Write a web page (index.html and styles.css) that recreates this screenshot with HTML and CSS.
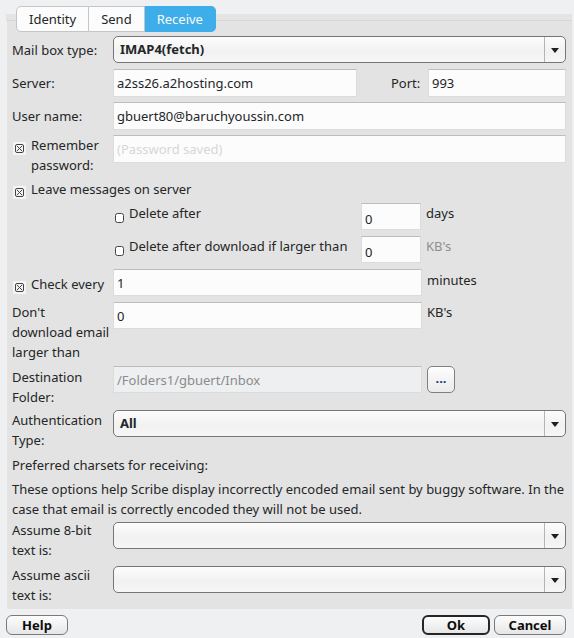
FILE: index.html
```html
<!DOCTYPE html>
<html lang="en">
<head>
    <meta charset="UTF-8">
    <title>Account options</title>
    <link rel="stylesheet" href="styles.css">
</head>
<body>

<div class="dialog">
    <div class="tabs">
        <div class="tab first">Identity</div>
        <div class="tab">Send</div>
        <div class="tab last active">Receive</div>
    </div>

    <div class="panel">
        <div class="row">
            <div class="label single">Mail box type:</div>
            <div class="select"><span class="value bold">IMAP4(fetch)</span><span class="arrow"></span></div>
        </div>

        <div class="row gap-6">
            <div class="label single">Server:</div>
            <input class="edit server" value="a2ss26.a2hosting.com">
            <div class="port-label">Port:</div>
            <input class="edit port" value="993">
        </div>

        <div class="row gap-5">
            <div class="label single">User name:</div>
            <input class="edit grow" value="gbuert80@baruchyoussin.com">
        </div>

        <div class="row gap-5">
            <div class="label check-label">
                <span class="check on"><svg width="9" height="9" viewBox="0 0 9 9"><rect x="0.5" y="0.5" width="8" height="8" rx="1.5" fill="none" stroke="#444"/><path d="M2 2 L7 7 M7 2 L2 7" stroke="#444" stroke-width="1"/></svg></span>
                <span>Remember password:</span>
            </div>
            <input class="edit grow placeholder" placeholder="(Password saved)">
        </div>

        <div class="row gap-4">
            <div class="check-line">
                <span class="check on"><svg width="9" height="9" viewBox="0 0 9 9"><rect x="0.5" y="0.5" width="8" height="8" rx="1.5" fill="none" stroke="#444"/><path d="M2 2 L7 7 M7 2 L2 7" stroke="#444" stroke-width="1"/></svg></span>
                <span>Leave messages on server</span>
            </div>
        </div>

        <div class="row gap-4">
            <div class="indent check-line">
                <span class="check off"><svg width="9" height="10" viewBox="0 0 9 10"><rect x="0.5" y="0.5" width="8" height="9" rx="2" fill="#fff" stroke="#444"/></svg></span>
                <span>Delete after</span>
            </div>
            <input class="edit small" value="0">
            <div class="unit">days</div>
        </div>

        <div class="row gap-6">
            <div class="indent check-line">
                <span class="check off"><svg width="9" height="10" viewBox="0 0 9 10"><rect x="0.5" y="0.5" width="8" height="9" rx="2" fill="#fff" stroke="#444"/></svg></span>
                <span>Delete after download if larger than</span>
            </div>
            <input class="edit small" value="0">
            <div class="unit muted">KB's</div>
        </div>

        <div class="row gap-6">
            <div class="label check-label every">
                <span class="check on"><svg width="9" height="9" viewBox="0 0 9 9"><rect x="0.5" y="0.5" width="8" height="8" rx="1.5" fill="none" stroke="#444"/><path d="M2 2 L7 7 M7 2 L2 7" stroke="#444" stroke-width="1"/></svg></span>
                <span>Check every</span>
            </div>
            <input class="edit mid" value="1">
            <div class="unit up">minutes</div>
        </div>

        <div class="row gap-6">
            <div class="label nowrap">Don't<br>download email<br>larger than</div>
            <input class="edit mid" value="0">
            <div class="unit">KB's</div>
        </div>

        <div class="row gap-4">
            <div class="label down">Destination Folder:</div>
            <input class="edit mid disabled" value="/Folders1/gbuert/Inbox" disabled>
            <div class="browse">...</div>
        </div>

        <div class="row gap-3">
            <div class="label">Authentication Type:</div>
            <div class="select"><span class="value bold">All</span><span class="arrow"></span></div>
        </div>

        <div class="row gap-5 text">Preferred charsets for receiving:</div>

        <div class="row gap-4 text">These options help Scribe display incorrectly encoded email sent by buggy software. In the case that email is correctly encoded they will not be used.</div>

        <div class="row gap-1">
            <div class="label">Assume 8-bit text is:</div>
            <div class="select drop-2"><span class="value"></span><span class="arrow"></span></div>
        </div>

        <div class="row gap-5">
            <div class="label">Assume ascii text is:</div>
            <div class="select drop-1"><span class="value"></span><span class="arrow"></span></div>
        </div>
    </div>

    <div class="buttons">
        <button class="btn help">Help</button>
        <div class="spacer"></div>
        <button class="btn ok">Ok</button>
        <button class="btn cancel">Cancel</button>
    </div>
</div>

</body>
</html>
```

FILE: styles.css
```css
body {
    margin: 0;
    background-color: #eff0f1;
    font-family: "Noto Sans", "Open Sans", sans-serif;
    font-size: 13px;
    color: #232627;
}

.dialog {
    width: 574px;
    height: 638px;
    box-sizing: border-box;
    padding-top: 6px;
}

.tabs {
    display: flex;
    margin-left: 16px;
    height: 25px;
    position: relative;
    z-index: 1;
}

.tab {
    background-color: #fcfcfc;
    border: 1px solid #c4c5c6;
    border-left: none;
    padding: 0 12px;
    line-height: 24px;
    height: 24px;
}

.tab.first {
    border-left: 1px solid #c4c5c6;
    border-radius: 5px 0 0 5px;
}

.tab.last {
    border-radius: 0 5px 5px 0;
}

.tab.active {
    background-color: #3daee9;
    border-color: #3daee9;
    color: #fcfcfc;
}

.panel {
    background-color: #e3e3e3;
    margin: -11px 2px 0 6px;
    border-top: 1px solid #d6d6d6;
    border-left: 1px solid #f1f1f1;
    border-bottom: 1px solid #f1f1f1;
    padding: 15px 6px 5px 5px;
    height: 590px;
    box-sizing: border-box;
    box-shadow: 0 -6px 0 #e4e4e4;
}

.row {
    display: flex;
    align-items: flex-start;
    line-height: 20px;
}

.gap-1 { margin-top: 1px; }
.gap-3 { margin-top: 3px; }
.gap-4 { margin-top: 4px; }
.gap-5 { margin-top: 5px; }
.gap-6 { margin-top: 6px; }

.label {
    width: 101px;
    flex: none;
}

.label.nowrap {
    white-space: nowrap;
}

.label.single {
    padding-top: 4px;
}

.label.down {
    padding-top: 1px;
}

.label.every {
    padding-top: 5px;
}

.check-label,
.check-line {
    display: flex;
    align-items: flex-start;
}

.check {
    flex: none;
    width: 13px;
    height: 13px;
    display: flex;
    align-items: center;
    justify-content: center;
    margin: 7px 5px 0 1px;
}

.check.on {
    background-color: #f4f4f4;
}

.check.off {
    margin: 8px 4px 0 1px;
    width: 11px;
}

.indent {
    margin-left: 101px;
    width: 248px;
    flex: none;
}

.edit {
    box-sizing: border-box;
    height: 28px;
    border: 1px solid #dcdcdc;
    border-top-color: #bdbdbd;
    background-color: #fcfcfc;
    font-family: inherit;
    font-size: 13px;
    color: #232627;
    padding: 0 3px;
    margin: 0;
    outline: none;
    min-width: 0;
}

.edit.grow {
    flex: 1;
}

.edit.server {
    flex: none;
    width: 244px;
}

.port-label {
    flex: none;
    padding: 4px 0 0 34px;
    width: 37px;
}

.edit.port {
    flex: 1;
}

.edit.small {
    flex: none;
    width: 60px;
    height: 27px;
    padding-top: 4px;
}

.edit.mid {
    flex: none;
    width: 309px;
    height: 27px;
}

.edit.disabled {
    background-color: #eeeff0;
    color: #8a8c8e;
}

.placeholder::placeholder {
    color: #d6d7d8;
}

.unit {
    margin-left: 5px;
}

.unit.up {
    margin-top: 1px;
}

.unit.muted {
    color: #8d8f91;
}

.browse {
    box-sizing: border-box;
    width: 28px;
    height: 27px;
    margin-left: 5px;
    border: 1px solid #7f7f7f;
    border-radius: 5px;
    background: linear-gradient(#fdfdfd, #ebebeb);
    text-align: center;
    line-height: 22px;
    font-weight: bold;
    color: #1c3c7a;
}

.select {
    flex: 1;
    box-sizing: border-box;
    height: 27px;
    border: 1px solid #767676;
    border-radius: 5px;
    background: linear-gradient(#fcfcfc, #f1f1f1 60%, #f6f6f6);
    display: flex;
}

.select.drop-2 {
    margin-top: 2px;
}

.select.drop-1 {
    margin-top: 1px;
}

.select .value {
    flex: 1;
    padding-left: 6px;
    line-height: 25px;
}

.bold {
    font-weight: bold;
}

.select .arrow {
    width: 20px;
    border-left: 1px solid #b4b4b4;
    position: relative;
}

.select .arrow::after {
    content: "";
    position: absolute;
    left: 6px;
    top: 11px;
    border-left: 4px solid transparent;
    border-right: 4px solid transparent;
    border-top: 5px solid #1e1e1e;
}

.text {
    display: block;
}

.buttons {
    display: flex;
    padding: 5px 8px 0 6px;
}

.spacer {
    flex: 1;
}

.btn {
    box-sizing: border-box;
    height: 20px;
    border: 1px solid #7a7a7a;
    border-radius: 6px;
    background: linear-gradient(#fdfdfd, #e6e6e6);
    font-family: inherit;
    font-size: 13px;
    font-weight: bold;
    color: #0d0d0d;
    padding: 0;
    line-height: 17px;
}

.btn.help {
    width: 62px;
}

.btn.ok {
    width: 68px;
    border: 2px solid #262626;
    line-height: 15px;
}

.btn.cancel {
    width: 72px;
    margin-left: 4px;
}
```
